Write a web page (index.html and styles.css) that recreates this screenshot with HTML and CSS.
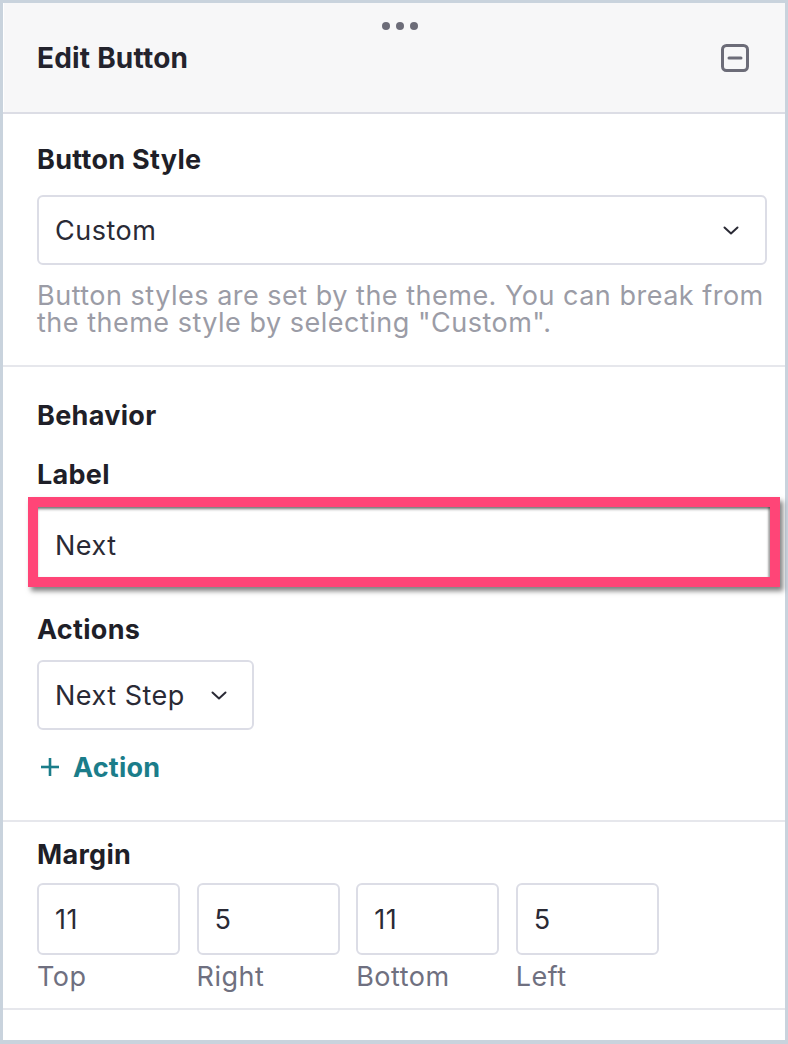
FILE: index.html
```html
<!DOCTYPE html>
<html lang="en">
<head>
<meta charset="utf-8">
<title>Edit Button</title>
<link rel="stylesheet" href="styles.css">
</head>
<body>
<div class="panel">
  <header class="panel-head">
    <div class="grip"><span></span><span></span><span></span></div>
    <div class="head-row">
      <h1 class="title">Edit Button</h1>
      <button class="collapse" aria-label="Collapse">
        <svg width="28" height="28" viewBox="0 0 28 28"><rect x="1.5" y="1.5" width="25" height="25" rx="4" fill="none" stroke="#6c6c78" stroke-width="3"/><line x1="8" y1="14" x2="20" y2="14" stroke="#6c6c78" stroke-width="3" stroke-linecap="round"/></svg>
      </button>
    </div>
  </header>

  <section class="sec sec-style">
    <div class="lbl">Button Style</div>
    <div class="select select-wide">
      <span class="select-text">Custom</span>
      <svg class="chev" width="16" height="9" viewBox="0 0 16 9"><polyline points="1.5,1.5 8,7.5 14.5,1.5" fill="none" stroke="#2a2a35" stroke-width="2" stroke-linecap="round" stroke-linejoin="round"/></svg>
    </div>
    <p class="help">Button styles are set by the theme. You can break from the theme style by selecting "Custom".</p>
  </section>

  <section class="sec sec-behavior">
    <div class="lbl">Behavior</div>
    <div class="lbl lbl-label">Label</div>
    <div class="highlight"><div class="input-field">Next</div></div>
    <div class="lbl lbl-actions">Actions</div>
    <div class="select select-auto">
      <span class="select-text">Next Step</span>
      <svg class="chev" width="16" height="9" viewBox="0 0 16 9"><polyline points="1.5,1.5 8,7.5 14.5,1.5" fill="none" stroke="#2a2a35" stroke-width="2" stroke-linecap="round" stroke-linejoin="round"/></svg>
    </div>
    <div class="add-action">
      <svg width="20" height="20" viewBox="0 0 20 20"><line x1="10" y1="1" x2="10" y2="19" stroke="#1b7d8a" stroke-width="2.6"/><line x1="1" y1="10" x2="19" y2="10" stroke="#1b7d8a" stroke-width="2.6"/></svg>
      <span>Action</span>
    </div>
  </section>

  <section class="sec sec-margin">
    <div class="lbl">Margin</div>
    <div class="margin-grid">
      <div class="m-item"><div class="m-box">11</div><div class="m-cap">Top</div></div>
      <div class="m-item"><div class="m-box">5</div><div class="m-cap">Right</div></div>
      <div class="m-item"><div class="m-box">11</div><div class="m-cap">Bottom</div></div>
      <div class="m-item"><div class="m-box">5</div><div class="m-cap">Left</div></div>
    </div>
  </section>
</div>
</body>
</html>
```

FILE: styles.css
```css
* { box-sizing: border-box; }

html, body {
  margin: 0;
  padding: 0;
  background: #ffffff;
}

body {
  font-family: Inter, "Noto Sans", "Liberation Sans", sans-serif;
  color: #23232d;
}

.panel {
  width: 788px;
  height: 1044px;
  border: 3px solid #c9d3dd;
  border-bottom-width: 4px;
  background: #ffffff;
  display: flex;
  flex-direction: column;
}

.panel-head {
  background: #f7f7f8;
  border-bottom: 2px solid #dcdde5;
  padding: 19px 36px 39px 34px;
  box-shadow: inset 1px 0 0 #ffffff;
}

.grip {
  display: flex;
  justify-content: center;
  gap: 6px;
  height: 8px;
  margin-left: 14px;
}

.grip span {
  width: 8px;
  height: 8px;
  border-radius: 50%;
  background: #6c6c78;
}

.head-row {
  display: flex;
  align-items: center;
  justify-content: space-between;
  margin-top: 13px;
  height: 30px;
}

.title {
  margin: 0;
  font-size: 28px;
  line-height: 30px;
  font-weight: 700;
  letter-spacing: 0.2px;
  color: #23232d;
}

.collapse {
  border: 0;
  background: transparent;
  padding: 0;
  width: 28px;
  height: 28px;
  display: block;
}

.collapse svg { display: block; }

.sec {
  padding-left: 34px;
  padding-right: 18px;
  border-bottom: 2px solid #e6e7ec;
}

.lbl {
  font-size: 27px;
  line-height: 30px;
  font-weight: 700;
  letter-spacing: 0.3px;
  color: #1f1f28;
}

.sec-style {
  padding-top: 31px;
  padding-bottom: 29px;
}

.select {
  display: flex;
  align-items: center;
  height: 70px;
  border: 2px solid #dcdde6;
  border-radius: 6px;
  padding-left: 16px;
  font-size: 27px;
  letter-spacing: 0.5px;
  color: #2a2a35;
  background: #ffffff;
}

.select-wide {
  margin-top: 20px;
  justify-content: space-between;
  padding-right: 26px;
}

.select-auto {
  margin-top: 15px;
  width: 217px;
  justify-content: space-between;
  padding-right: 25px;
}

.chev { display: block; }

.help {
  margin: 17px 0 0 0;
  font-size: 27px;
  line-height: 27px;
  letter-spacing: 0.5px;
  color: #9b9ca6;
}

.sec-behavior {
  padding-top: 34px;
  padding-bottom: 38px;
}

.lbl-label { margin-top: 29px; }

.highlight {
  margin-top: 7px;
  margin-left: -9px;
  width: 752px;
  border: 10px solid #ff4577;
  box-shadow: 3px 4px 5px rgba(0, 0, 0, 0.5);
}

.input-field {
  height: 70px;
  display: flex;
  align-items: center;
  padding-left: 17px;
  padding-top: 7px;
  font-size: 27px;
  letter-spacing: 0.5px;
  color: #2a2a35;
  background: #ffffff;
  box-shadow: inset 0 3px 3px -1px rgba(0, 0, 0, 0.55), inset -3px 0 2px -1px rgba(0, 0, 0, 0.3);
}

.lbl-actions { margin-top: 28px; }

.add-action {
  margin-top: 22px;
  display: flex;
  align-items: center;
  gap: 13px;
  padding-left: 3px;
  height: 30px;
  font-size: 27px;
  font-weight: 700;
  letter-spacing: 0.2px;
  color: #1b7d8a;
}

.add-action svg { display: block; }

.sec-margin {
  padding-top: 18px;
  padding-bottom: 16px;
}

.margin-grid {
  margin-top: 13px;
  display: grid;
  grid-template-columns: repeat(4, 143px);
  column-gap: 16.6px;
}

.m-box {
  height: 72px;
  border: 2px solid #dcdde6;
  border-radius: 6px;
  padding-left: 16px;
  display: flex;
  align-items: center;
  font-size: 27px;
  letter-spacing: 0.5px;
  color: #2a2a35;
}

.m-cap {
  margin-top: 7px;
  font-size: 27px;
  line-height: 30px;
  letter-spacing: 0.5px;
  color: #6f7080;
}
```
